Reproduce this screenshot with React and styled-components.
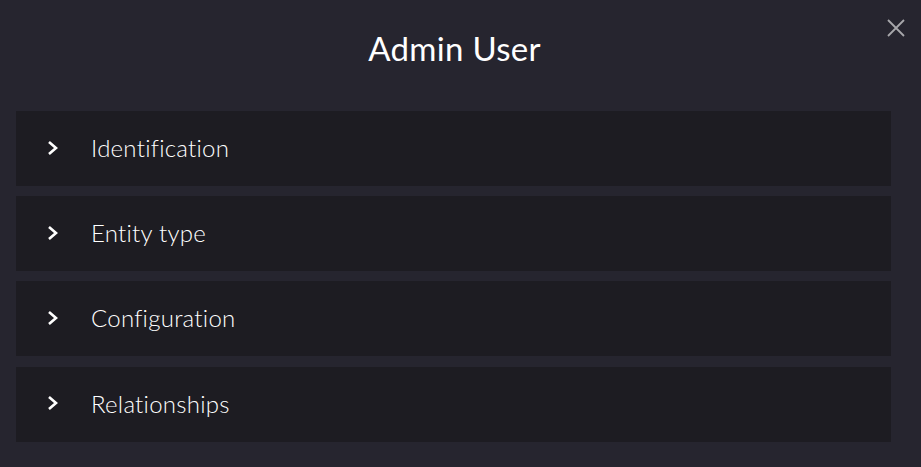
import React from 'react';
import styled, { createGlobalStyle } from 'styled-components';

const GlobalStyle = createGlobalStyle`
  html, body {
    margin: 0;
    padding: 0;
    background: #26252f;
  }
  * { box-sizing: border-box; }
`;

const Modal = styled.div`
  position: relative;
  width: 921px;
  height: 467px;
  background: #26252f;
  font-family: Lato, "Open Sans", sans-serif;
  color: #ffffff;
  padding: 28px 30px 0 16px;
`;

const Title = styled.h1`
  margin: 0 0 43px;
  padding-left: 2px;
  text-align: center;
  font-size: 33px;
  font-weight: 400;
  line-height: 40px;
  letter-spacing: 0.3px;
`;

const CloseButton = styled.button`
  position: absolute;
  top: 17px;
  right: 14px;
  width: 22px;
  height: 22px;
  padding: 0;
  border: none;
  background: none;
  cursor: pointer;
  display: flex;
  align-items: center;
  justify-content: center;
`;

const List = styled.div`
  display: flex;
  flex-direction: column;
  gap: 10.2px;
`;

const Section = styled.div`
  height: 75px;
  background: #1d1c22;
  display: flex;
  align-items: center;
  padding-left: 30px;
  padding-bottom: 2px;
  gap: 31px;
`;

const Chevron = styled.svg`
  width: 14px;
  height: 16px;
  flex: none;
`;

const Label = styled.span`
  font-size: 24px;
  font-weight: 300;
  letter-spacing: 0.25px;
`;

const sections = ['Identification', 'Entity type', 'Configuration', 'Relationships'];

const App = () => {
  return (
    <>
      <GlobalStyle />
      <Modal>
        <CloseButton aria-label="close">
          <svg width="18" height="18" viewBox="0 0 18 18">
            <path d="M1 1 L17 17 M17 1 L1 17" stroke="#a7a7ab" strokeWidth="1.8" fill="none" />
          </svg>
        </CloseButton>
        <Title>Admin User</Title>
        <List>
          {sections.map((s) => (
            <Section key={s}>
              <Chevron viewBox="0 0 14 16">
                <path d="M3 2 L10 8 L3 14" stroke="#ffffff" strokeWidth="2.6" fill="none" />
              </Chevron>
              <Label>{s}</Label>
            </Section>
          ))}
        </List>
      </Modal>
    </>
  );
};

export default App;
